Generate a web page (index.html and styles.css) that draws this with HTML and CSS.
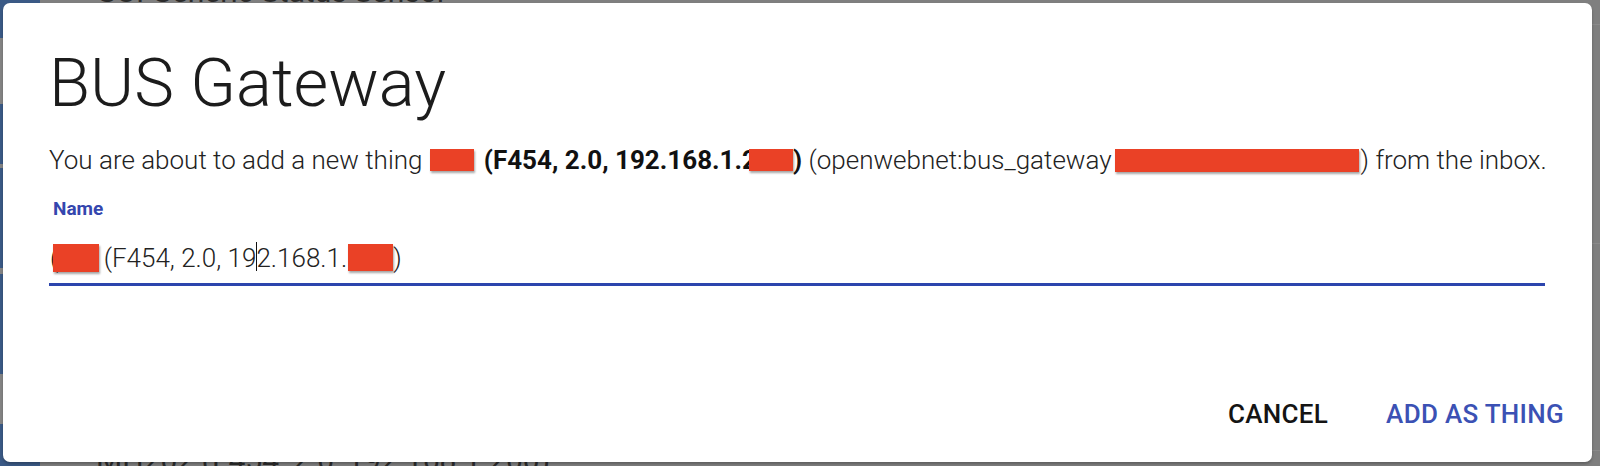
FILE: index.html
```html
<!DOCTYPE html>
<html lang="en">
<head>
<meta charset="utf-8">
<title>BUS Gateway</title>
<link rel="stylesheet" href="styles.css">
</head>
<body>
<div class="page">
  <div class="sidebar">
    <span class="seg blue s1"></span>
    <span class="seg gray s2"></span>
    <span class="seg blue s3"></span>
    <span class="seg gray s4"></span>
    <span class="seg blue s5"></span>
    <span class="seg gray s6"></span>
    <span class="seg blue s7"></span>
    <span class="seg gray s8"></span>
    <span class="seg blue s9"></span>
  </div>
  <div class="main">
    <div class="row row-top"><span class="behind-text">GUI Generic Status Sensor</span></div>
    <div class="row row-mid"></div>
    <div class="row row-mid2"></div>
    <div class="row row-bottom"><span class="behind-text">MH202 (F454, 2.0, 192.168.1.200)</span></div>
  </div>
</div>

<div class="dialog" role="dialog" aria-labelledby="dlg-title">
  <h1 class="dialog-title" id="dlg-title">BUS Gateway</h1>
  <p class="dialog-text">You are about to add a new thing <span class="redact r1"></span><b>(F454, 2.0, 192.168.1.2</b><span class="redact r2"></span><b>)</b> (openwebnet:bus_gateway<span class="redact r3"></span>) from the inbox.</p>
  <div class="field">
    <label class="field-label">Name</label>
    <div class="field-input">(<span class="redact r4"></span> (F454, 2.0, 19<span class="caret"></span>2.168.1.<span class="redact r5"></span>)</div>
  </div>
  <div class="actions">
    <button class="btn btn-cancel">CANCEL</button>
    <button class="btn btn-primary">ADD AS THING</button>
  </div>
</div>
</body>
</html>
```

FILE: styles.css
```css
html, body {
  margin: 0;
  padding: 0;
  width: 1600px;
  height: 466px;
  overflow: hidden;
}

body {
  background: #7f7f7f;
  font-family: Roboto, "Liberation Sans", sans-serif;
  color: #212121;
  position: relative;
}

/* ---------- page behind the overlay ---------- */
.page {
  display: flex;
  width: 1600px;
  height: 466px;
}

.sidebar {
  width: 40px;
  display: flex;
  flex-direction: column;
}

.seg { display: block; }
.seg.blue { background: #3b5a86; }
.seg.gray { background: #858585; }
.s1 { height: 38px; }
.s2 { height: 66px; }
.s3 { height: 60px; }
.s4 { height: 4px; }
.s5 { height: 100px; }
.s6 { height: 6px; }
.s7 { height: 100px; }
.s8 { height: 50px; }
.s9 { flex: 1; }

.main {
  flex: 1;
  display: flex;
  flex-direction: column;
}

.row {
  border-bottom: 1px solid #8a8a8a;
  display: flex;
  padding-left: 56px;
  overflow: hidden;
}

.row-top {
  height: 24px;
  align-items: flex-end;
}
.row-top .behind-text {
  margin-bottom: 17px;
}
.row-mid { height: 218px; }
.row-mid2 { height: 206px; }
.row-bottom {
  flex: 1;
  border-bottom: none;
  align-items: flex-start;
}
.row-bottom .behind-text {
  margin-top: -6px;
}

.behind-text {
  font-size: 30px;
  line-height: 30px;
  color: #2b2b2b;
  white-space: nowrap;
}

/* ---------- dialog ---------- */
.dialog {
  position: absolute;
  top: 3px;
  left: 3px;
  right: 8px;
  bottom: 4px;
  background: #fff;
  border-radius: 7px;
  box-shadow: 0 2px 3px rgba(0,0,0,0.25);
  display: flex;
  flex-direction: column;
  padding-top: 40px;
  box-sizing: border-box;
}

.dialog-title {
  margin: 0 0 0 46px;
  font-size: 67px;
  line-height: 80px;
  font-weight: 300;
  color: #1c1c1c;
  letter-spacing: 0;
}

.dialog-text {
  margin: 22px 0 0 46px;
  font-size: 26px;
  line-height: 30px;
  font-weight: 300;
  color: #222;
  white-space: nowrap;
}

.dialog-text b {
  font-weight: 700;
  color: #111;
}

.redact {
  display: inline-block;
  background: #ea4126;
  box-shadow: 1px 2px 2px rgba(0,0,0,0.35);
  vertical-align: top;
}

.r1 { width: 44px; height: 22px; margin-top: 4px; margin-left: 1px; margin-right: 10px; }
.r2 { width: 44px; height: 22px; margin-top: 4px; margin-left: -8px; }
.r3 { width: 244px; height: 23px; margin-top: 4px; margin-left: 3px; margin-right: 2px; }

.field {
  margin: 22px 47px 0 46px;
  display: flex;
  flex-direction: column;
}

.field-label {
  font-size: 19px;
  line-height: 24px;
  font-weight: 700;
  color: #3446ae;
  padding-left: 4px;
}

.field-input {
  margin-top: 19px;
  font-size: 26px;
  line-height: 36px;
  font-weight: 300;
  color: #222;
  padding: 0 0 7px 1px;
  border-bottom: 3px solid #2c45ad;
  white-space: nowrap;
}

.r4 { width: 46px; height: 28px; margin-top: 4px; margin-left: -5px; margin-right: -2px; }
.r5 { width: 45px; height: 27px; margin-top: 4px; margin-left: 1px; }

.caret {
  display: inline-block;
  width: 1px;
  height: 29px;
  background: #111;
  vertical-align: top;
  margin-top: 2px;
  margin-right: -1px;
}

.actions {
  margin-top: auto;
  display: flex;
  justify-content: flex-end;
  gap: 58px;
  padding: 0 28px 30px 0;
}

.btn {
  border: none;
  background: none;
  padding: 0;
  font-family: Roboto, "Liberation Sans", sans-serif;
  font-size: 26px;
  line-height: 36px;
  font-weight: 500;
  letter-spacing: 0.3px;
  cursor: pointer;
}

.btn-cancel { color: #141414; }
.btn-primary { color: #3b51b4; }
```
